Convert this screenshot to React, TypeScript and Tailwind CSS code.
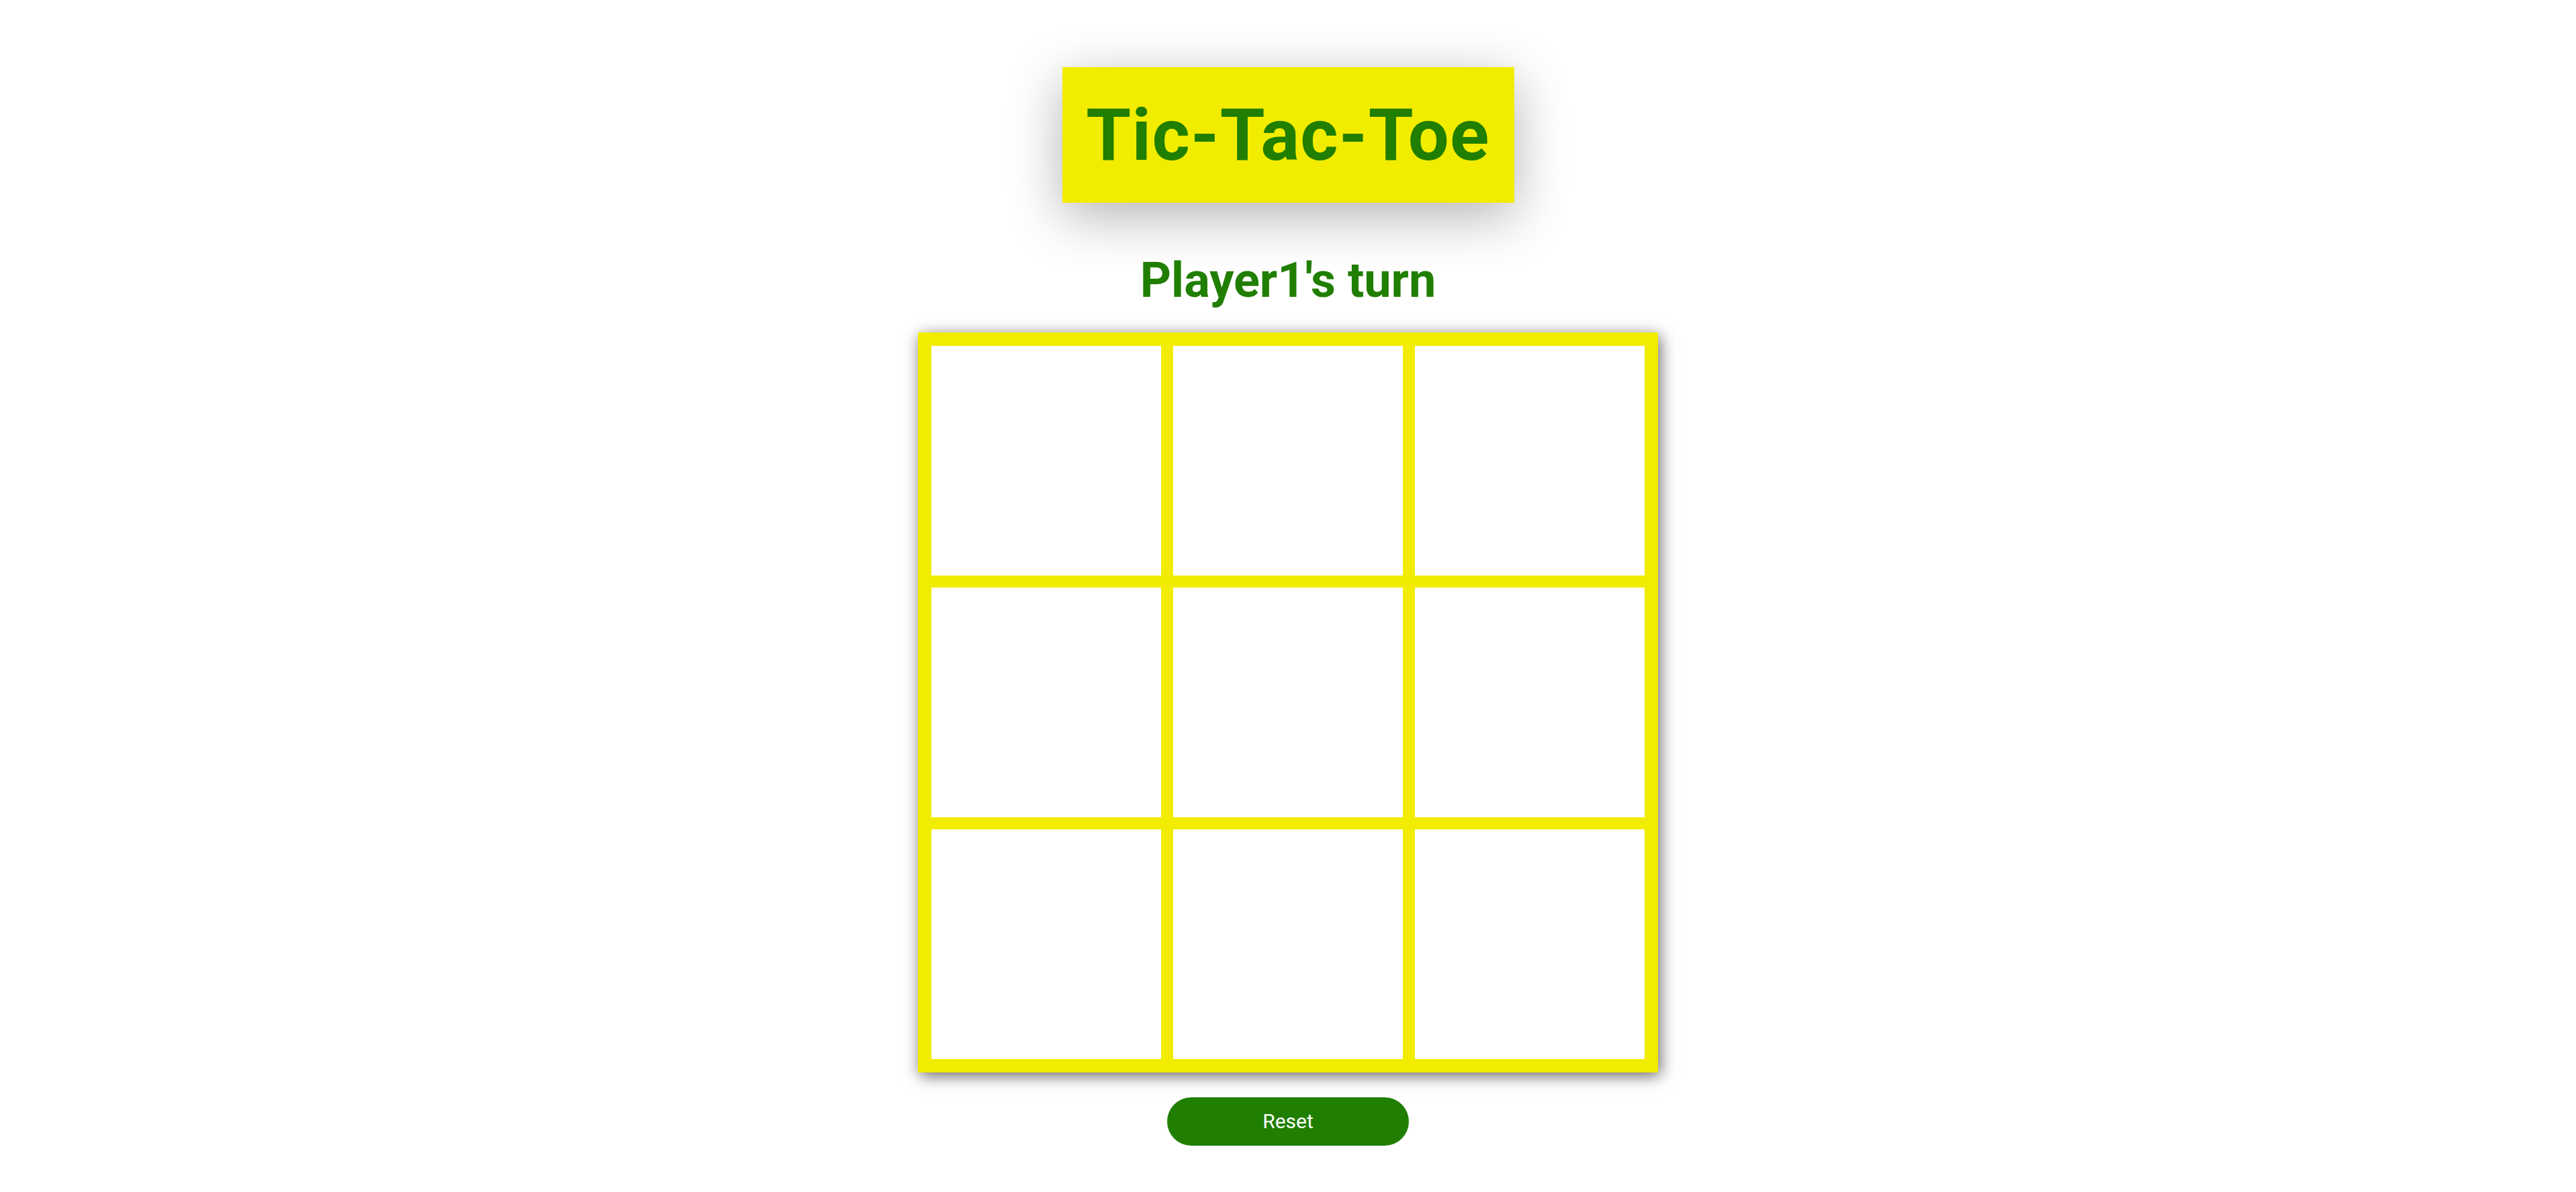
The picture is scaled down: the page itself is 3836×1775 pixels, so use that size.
import { useState } from "react";

type Mark = "X" | "O" | null;

export default function App() {
  const [cells, setCells] = useState<Mark[]>(Array(9).fill(null));
  const [turn, setTurn] = useState<1 | 2>(1);

  const play = (i: number) => {
    if (cells[i]) return;
    const next = [...cells];
    next[i] = turn === 1 ? "X" : "O";
    setCells(next);
    setTurn(turn === 1 ? 2 : 1);
  };

  const reset = () => {
    setCells(Array(9).fill(null));
    setTurn(1);
  };

  return (
    <div className="min-h-screen bg-white flex flex-col items-center font-['Roboto',sans-serif]">
      <h1 className="mt-[100px] w-[673px] h-[202px] flex items-center justify-center bg-[#f2ec00] text-[#207e00] text-[108px] font-bold tracking-[1.3px] leading-none shadow-[0_20px_80px_rgba(0,0,0,0.3)]">
        Tic-Tac-Toe
      </h1>
      <h2 className="mt-[74px] text-[72px] leading-[84px] font-bold text-[#207e00]">
        Player{turn}'s turn
      </h2>
      <div className="mt-[35px] grid grid-cols-3 gap-[18px] p-[20px] bg-[#f2ec00] shadow-[3px_5px_22px_rgba(0,0,0,0.6)]">
        {cells.map((c, i) => (
          <button
            key={i}
            onClick={() => play(i)}
            className="w-[342px] h-[342px] bg-white flex items-center justify-center text-[200px] font-bold text-[#207e00] leading-none"
          >
            {c}
          </button>
        ))}
      </div>
      <button
        onClick={reset}
        className="mt-[37px] w-[360px] h-[72px] rounded-full bg-[#207e00] text-white text-[30px] leading-none"
      >
        Reset
      </button>
    </div>
  );
}
